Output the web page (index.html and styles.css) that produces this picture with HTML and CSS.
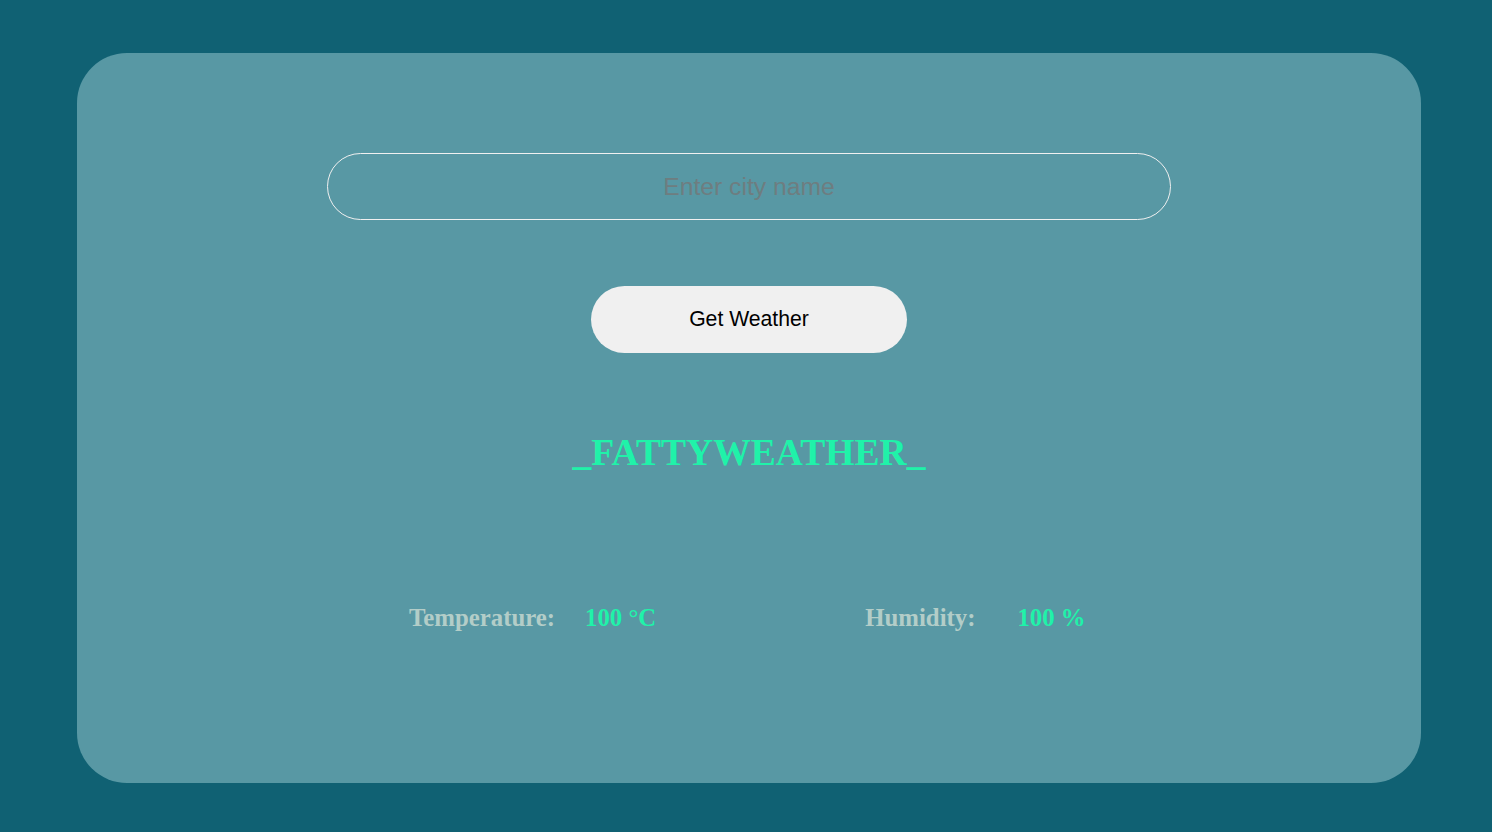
FILE: index.html
```html
<!DOCTYPE html>
<html>
<head>
<meta charset="utf-8">
<title>FattyWeather</title>
<link rel="stylesheet" href="styles.css">
</head>
<body>
<main class="card">
  <input class="city" type="text" placeholder="Enter city name">
  <button class="get">Get Weather</button>
  <h1 class="title">_FATTYWEATHER_</h1>
  <div class="stats">
    <div class="stat temp"><span class="label">Temperature:</span><span class="value">100 °C</span></div>
    <div class="stat hum"><span class="label">Humidity:</span><span class="value">100 %</span></div>
  </div>
</main>
</body>
</html>
```
FILE: styles.css
```css
html, body {
  margin: 0;
  padding: 0;
}
body {
  background: #106173;
  width: 1492px;
  height: 832px;
  padding: 53px 71px 49px 77px;
  box-sizing: border-box;
  font-family: "Liberation Serif", serif;
}
.card {
  width: 1344px;
  height: 730px;
  background: #5898a4;
  border-radius: 50px;
  display: flex;
  flex-direction: column;
  align-items: center;
  padding-top: 100px;
  box-sizing: border-box;
}
.city {
  width: 844px;
  height: 67px;
  box-sizing: border-box;
  border: 1px solid #f0f0f0;
  border-radius: 34px;
  background: transparent;
  font-family: "Liberation Sans", sans-serif;
  font-size: 24.7px;
  text-align: center;
  color: #222;
  outline: none;
}
.city::placeholder {
  color: #6e7d80;
}
.get {
  margin-top: 66px;
  width: 316px;
  height: 67px;
  border: none;
  border-radius: 34px;
  background: #f0f0f0;
  font-family: "Liberation Sans", sans-serif;
  font-size: 21.2px;
  color: #000;
  padding: 0 0 2px 0;
}
.title {
  margin: 78px 0 0 0;
  font-size: 37.6px;
  font-weight: bold;
  color: #20f2a9;
  line-height: 44px;
}
.stats {
  margin-top: 129px;
  display: flex;
  align-self: flex-start;
  margin-left: 332px;
  gap: 209px;
}
.stat {
  display: flex;
  gap: 30px;
  font-size: 24.8px;
  font-weight: bold;
}
.hum {
  gap: 42px;
}
.label {
  color: #b3cdc8;
}
.value {
  color: #20f2a9;
}
```
